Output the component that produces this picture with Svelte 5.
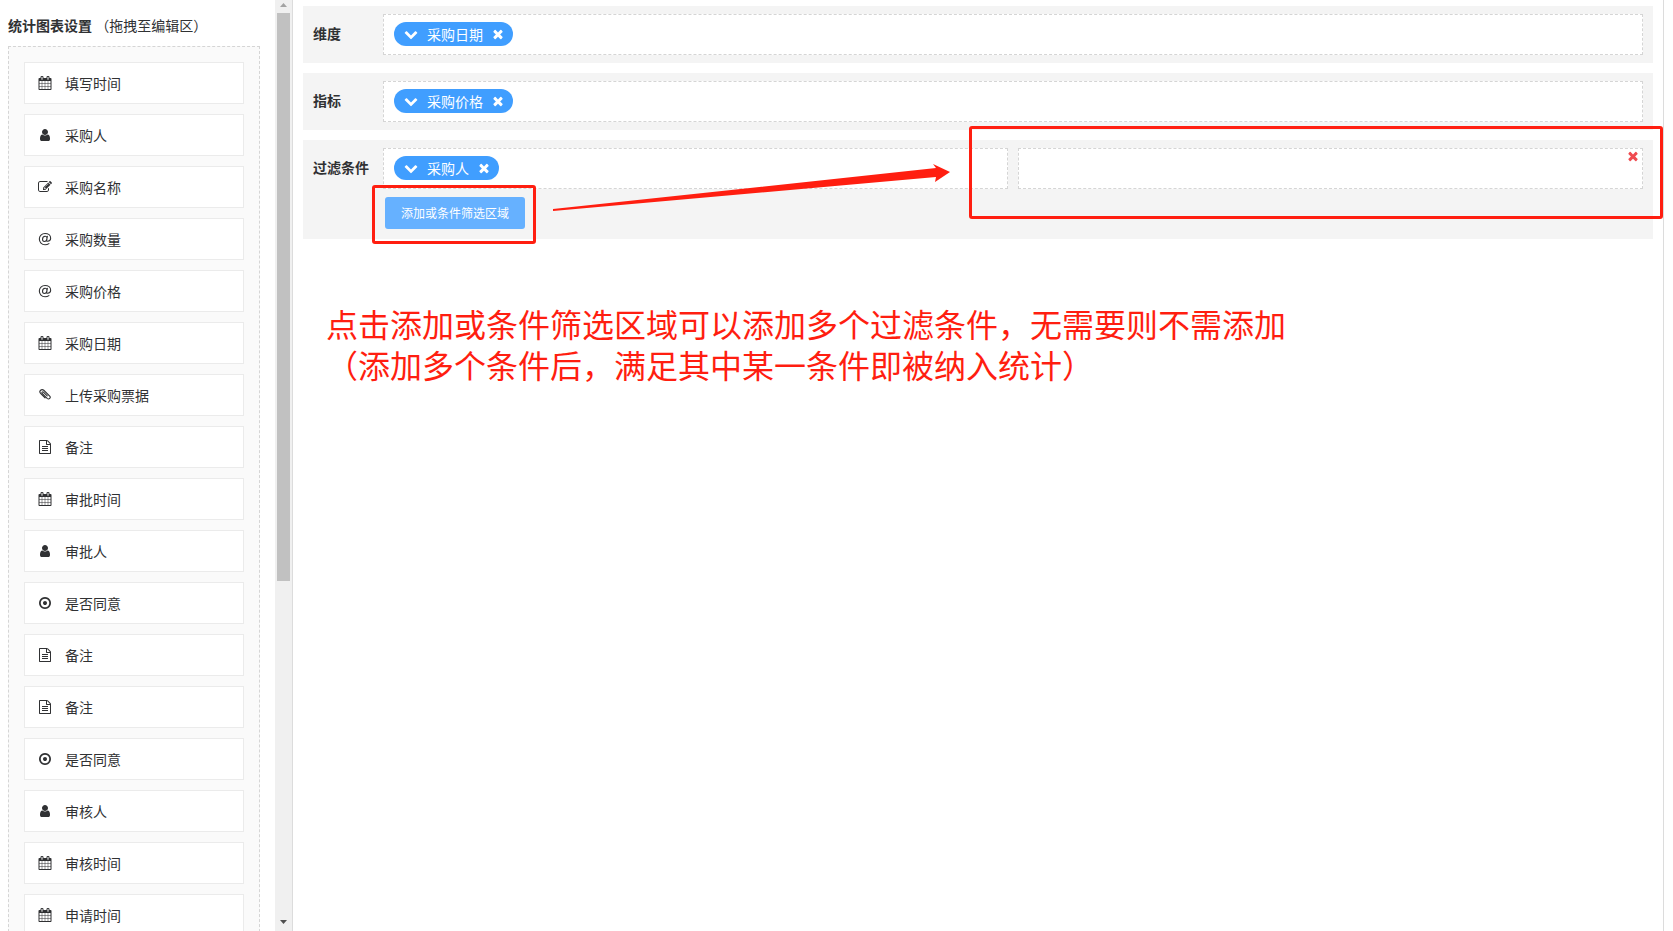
<script lang="ts">
	type Tag = { id: string; label: string };
	type Field = { icon: keyof typeof icons; label: string };

	const icons = {
		calendar:
			'M192 1664h288v-288h-288v288zm352 0h320v-288h-320v288zm-352-352h288v-320h-288v320zm352 0h320v-320h-320v320zm-352-384h288v-288h-288v288zm736 736h320v-288h-320v288zm-384-736h320v-288h-320v288zm768 736h288v-288h-288v288zm-384-352h320v-320h-320v320zm-352-864v-288q0-13-9.5-22.5t-22.5-9.5h-64q-13 0-22.5 9.5t-9.5 22.5v288q0 13 9.5 22.5t22.5 9.5h64q13 0 22.5-9.5t9.5-22.5zm736 864h288v-320h-288v320zm-384-384h320v-288h-320v288zm384 0h288v-288h-288v288zm32-480v-288q0-13-9.5-22.5t-22.5-9.5h-64q-13 0-22.5 9.5t-9.5 22.5v288q0 13 9.5 22.5t22.5 9.5h64q13 0 22.5-9.5t9.5-22.5zm384-64v1280q0 52-38 90t-90 38h-1408q-52 0-90-38t-38-90v-1280q0-52 38-90t90-38h128v-96q0-66 47-113t113-47h64q66 0 113 47t47 113v96h384v-96q0-66 47-113t113-47h64q66 0 113 47t47 113v96h128q52 0 90 38t38 90z',
		user: 'M1536 1399q0 109-62.5 187t-150.5 78h-854q-88 0-150.5-78t-62.5-187q0-85 8.5-160.5t31.5-152 58.5-131 94-89 134.5-34.5q131 128 313 128t313-128q76 0 134.5 34.5t94 89 58.5 131 31.5 152 8.5 160.5zm-256-887q0 159-112.5 271.5t-271.5 112.5-271.5-112.5-112.5-271.5 112.5-271.5 271.5-112.5 271.5 112.5 112.5 271.5z',
		edit: 'M888 1184l116-116-152-152-116 116v56h96v96h56zm440-720q-16-16-33 1l-350 350q-17 17-1 33t33-1l350-350q17-17 1-33zm80 594v190q0 119-84.5 203.5t-203.5 84.5h-832q-119 0-203.5-84.5t-84.5-203.5v-832q0-119 84.5-203.5t203.5-84.5h832q63 0 117 25 15 7 18 23 3 17-9 29l-49 49q-14 14-32 8-23-6-45-6h-832q-66 0-113 47t-47 113v832q0 66 47 113t113 47h832q66 0 113-47t47-113v-126q0-13 9-22l64-64q15-15 35-7t20 29zm-96-738l288 288-672 672h-288v-288zm444 132l-92 92-288-288 92-92q28-28 68-28t68 28l152 152q28 28 28 68t-28 68z',
		file: 'M1596 380q28 28 48 76t20 88v1152q0 40-28 68t-68 28h-1344q-40 0-68-28t-28-68v-1600q0-40 28-68t68-28h896q40 0 88 20t76 48zm-444-244v376h376q-10-29-22-41l-313-313q-12-12-41-22zm384 1528v-1024h-416q-40 0-68-28t-28-68v-416h-768v1536h1280zm-1024-864q0-14 9-23t23-9h704q14 0 23 9t9 23v64q0 14-9 23t-23 9h-704q-14 0-23-9t-9-23v-64zm736 224q14 0 23 9t9 23v64q0 14-9 23t-23 9h-704q-14 0-23-9t-9-23v-64q0-14 9-23t23-9h704zm0 256q14 0 23 9t9 23v64q0 14-9 23t-23 9h-704q-14 0-23-9t-9-23v-64q0-14 9-23t23-9h704z',
		radio: 'M1152 896q0 106-75 181t-181 75-181-75-75-181 75-181 181-75 181 75 75 181zm-256-544q-148 0-273 73t-198 198-73 273 73 273 198 198 273 73 273-73 198-198 73-273-73-273-198-198-273-73zm768 544q0 209-103 385.5t-279.5 279.5-385.5 103-385.5-103-279.5-279.5-103-385.5 103-385.5 279.5-279.5 385.5-103 385.5 103 279.5 279.5 103 385.5z',
		down: 'M1683 808l-742 741q-19 19-45 19t-45-19l-742-741q-19-19-19-45.5t19-45.5l166-165q19-19 45-19t45 19l531 531 531-531q19-19 45-19t45 19l166 165q19 19 19 45.5t-19 45.5z',
		times: 'M1490 1322q0 40-28 68l-136 136q-28 28-68 28t-68-28l-294-294-294 294q-28 28-68 28t-68-28l-136-136q-28-28-28-68t28-68l294-294-294-294q-28-28-28-68t28-68l136-136q28-28 68-28t68 28l294 294 294-294q28-28 68-28t68 28l136 136q28 28 28 68t-28 68l-294 294 294 294q28 28 28 68z',
		// the two below are drawn as strokes
		at: 'M1200 560L1110 1000Q1085 1190 1220 1190C1460 1180 1620 1010 1620 800C1620 430 1310 190 900 190C480 190 170 500 170 896C170 1320 480 1640 900 1640Q1190 1640 1400 1480M1150 800C1150 650 1050 540 910 540C720 540 580 720 580 930C580 1100 680 1210 810 1210C1000 1210 1150 1010 1150 800',
		clip: 'M1180 1010L690 520Q610 440 530 520T530 680L1170 1320Q1350 1480 1500 1340T1500 1040L740 290Q530 110 330 290T320 690L900 1270'
	};
	const stroked = ['at', 'clip'];

	const fields: Field[] = [
		{ icon: 'calendar', label: '填写时间' },
		{ icon: 'user', label: '采购人' },
		{ icon: 'edit', label: '采购名称' },
		{ icon: 'at', label: '采购数量' },
		{ icon: 'at', label: '采购价格' },
		{ icon: 'calendar', label: '采购日期' },
		{ icon: 'clip', label: '上传采购票据' },
		{ icon: 'file', label: '备注' },
		{ icon: 'calendar', label: '审批时间' },
		{ icon: 'user', label: '审批人' },
		{ icon: 'radio', label: '是否同意' },
		{ icon: 'file', label: '备注' },
		{ icon: 'file', label: '备注' },
		{ icon: 'radio', label: '是否同意' },
		{ icon: 'user', label: '审核人' },
		{ icon: 'calendar', label: '审核时间' },
		{ icon: 'calendar', label: '申请时间' }
	];

	let dimensions: Tag[] = $state([{ id: 'date', label: '采购日期' }]);
	let metrics: Tag[] = $state([{ id: 'price', label: '采购价格' }]);
	let filters: Tag[][] = $state([[{ id: 'buyer', label: '采购人' }], []]);

	function removeTag(list: Tag[], id: string) {
		const i = list.findIndex((t) => t.id === id);
		if (i >= 0) list.splice(i, 1);
	}
</script>

{#snippet icon(name: keyof typeof icons)}
	<svg class="icon" class:stroked={stroked.includes(name)} viewBox="0 0 1792 1792" aria-hidden="true">
		<path d={icons[name]} />
	</svg>
{/snippet}

{#snippet tags(list: Tag[])}
	{#each list as tag (tag.id)}
		<span class="tag">
			<button type="button" class="tag-menu">{@render icon('down')}<span>{tag.label}</span></button>
			<button type="button" class="tag-remove" aria-label="删除" onclick={() => removeTag(list, tag.id)}>
				{@render icon('times')}
			</button>
		</span>
	{/each}
{/snippet}

<div class="page">
	<aside class="sidebar">
		<div class="fields">
			<h2><strong>统计图表设置</strong> <span>（拖拽至编辑区）</span></h2>
			<ul>
				{#each fields as field}
					<li draggable="true">{@render icon(field.icon)}<span>{field.label}</span></li>
				{/each}
			</ul>
		</div>
		<div class="scrollbar" aria-hidden="true">
			<svg class="arrow-up" viewBox="0 0 7 4"><path d="M0 4L3.5 0L7 4Z" /></svg>
			<div class="track"><div class="thumb"></div></div>
			<svg class="arrow-down" viewBox="0 0 7 4"><path d="M0 0L3.5 4L7 0Z" /></svg>
		</div>
	</aside>

	<main>
		<section class="row">
			<h3>维度</h3>
			<div class="zone">{@render tags(dimensions)}</div>
		</section>
		<section class="row">
			<h3>指标</h3>
			<div class="zone">{@render tags(metrics)}</div>
		</section>
		<section class="row">
			<h3>过滤条件</h3>
			<div class="conditions">
				<div class="zones">
					{#each filters as list, i}
						<div class="zone">
							{@render tags(list)}
							{#if i === 0}
								<svg class="pointer" viewBox="0 0 397 49" preserveAspectRatio="none" aria-hidden="true">
									<path d="M0 46L383 5L380 1L397 9L382 19L383 14L0 48Z" />
								</svg>
							{:else}
								<button type="button" class="zone-remove" aria-label="删除区域" onclick={() => filters.splice(i, 1)}>
									{@render icon('times')}
								</button>
								<div class="mark mark-zone"></div>
							{/if}
						</div>
					{/each}
				</div>
				<div class="add-wrap">
					<button type="button" class="add" onclick={() => filters.push([])}>添加或条件筛选区域</button>
					<div class="mark mark-add"></div>
				</div>
			</div>
		</section>

		<p class="note">
			点击添加或条件筛选区域可以添加多个过滤条件，无需要则不需添加<br />（添加多个条件后，满足其中某一条件即被纳入统计）
		</p>
	</main>
</div>

<style>
	:global(body) {
		margin: 0;
	}

	.page {
		display: flex;
		height: 100vh;
		overflow: hidden;
		background: #fff;
		color: #303133;
		font: 14px/20px 'Noto Sans CJK SC', sans-serif;
		text-spacing-trim: space-all;
	}

	button {
		padding: 0;
		border: 0;
		background: none;
		color: inherit;
		font: inherit;
		cursor: pointer;
	}

	.icon {
		display: block;
		flex: none;
		width: 14px;
		height: 14px;
		fill: currentColor;
		overflow: visible;
	}

	.icon.stroked {
		fill: none;
		stroke: currentColor;
		stroke-width: 140;
		stroke-linecap: round;
	}

	.sidebar {
		display: flex;
		flex: none;
		box-sizing: border-box;
		width: 293px;
		border-right: 1px solid #dcdcdc;
	}

	.fields {
		flex: 1;
		padding: 15px 15px 0 8px;
		overflow: hidden;
	}

	h2 {
		margin: 0 0 11px;
		font-size: 14px;
		font-weight: 400;
		line-height: 20px;
		white-space: nowrap;
	}

	ul {
		display: flex;
		flex-direction: column;
		gap: 10px;
		margin: 0;
		padding: 15px;
		border: 1px dashed #d5d5d5;
		background: #fafafa;
		list-style: none;
	}

	li {
		display: flex;
		align-items: center;
		gap: 13px;
		box-sizing: border-box;
		height: 42px;
		padding: 0 13px;
		border: 1px solid #ebebeb;
		background: #fff;
		cursor: move;
	}

	.scrollbar {
		display: flex;
		flex: none;
		flex-direction: column;
		align-items: center;
		box-sizing: border-box;
		width: 17px;
		padding: 3px 2px 7px;
		background: #f0f0f0;
	}

	.scrollbar svg {
		width: 7px;
		height: 4px;
		fill: #505050;
	}

	.scrollbar .arrow-up {
		fill: #a3a3a3;
	}

	.track {
		flex: 1;
		align-self: stretch;
		padding: 6px 0;
	}

	.thumb {
		height: 63%;
		background: #c1c1c1;
	}

	main {
		display: flex;
		flex: 1;
		flex-direction: column;
		gap: 10px;
		min-width: 0;
		margin-right: 9px;
		padding: 6px 10px 0;
		border-right: 1px solid #dcdcdc;
	}

	.row {
		display: flex;
		padding: 8px 10px;
		background: #f4f4f4;
	}

	h3 {
		flex: none;
		width: 70px;
		margin: 0;
		font-size: 14px;
		line-height: 39px;
	}

	.zone {
		position: relative;
		display: flex;
		flex: 1;
		align-items: flex-start;
		gap: 10px;
		box-sizing: border-box;
		height: 41px;
		padding: 7px 10px;
		border: 1px dashed #d5d5d5;
		background: #fff;
	}

	.tag {
		display: flex;
		align-items: center;
		gap: 8px;
		height: 24px;
		padding: 0 8px 0 10px;
		border-radius: 12px;
		background: #409eff;
		color: #fff;
	}

	.tag-menu {
		display: flex;
		align-items: center;
		gap: 9px;
	}

	.conditions {
		flex: 1;
	}

	.zones {
		display: flex;
		gap: 10px;
	}

	.zone-remove {
		position: absolute;
		top: 0;
		right: 2px;
		color: #f04b50;
	}

	.add-wrap {
		position: relative;
		width: 140px;
		margin: 8px 2px 2px;
	}

	.add {
		display: block;
		width: 100%;
		height: 32px;
		border-radius: 3px;
		background: #66b1ff;
		color: #fff;
		font-size: 12px;
	}

	.mark {
		position: absolute;
		border: 3px solid #ff1e10;
		border-radius: 3px;
		pointer-events: none;
	}

	.mark-add {
		inset: -12px -11px -15px -13px;
	}

	.mark-zone {
		inset: -23px -21px -31px -50px;
		z-index: 1;
	}

	.pointer {
		position: absolute;
		top: 14px;
		left: 169px;
		width: calc(100% - 226px);
		height: 49px;
		fill: #ff1e10;
		pointer-events: none;
	}

	.note {
		margin: 54px 23px 0;
		color: #ff1e10;
		font-size: 32px;
		line-height: 41px;
	}
</style>
